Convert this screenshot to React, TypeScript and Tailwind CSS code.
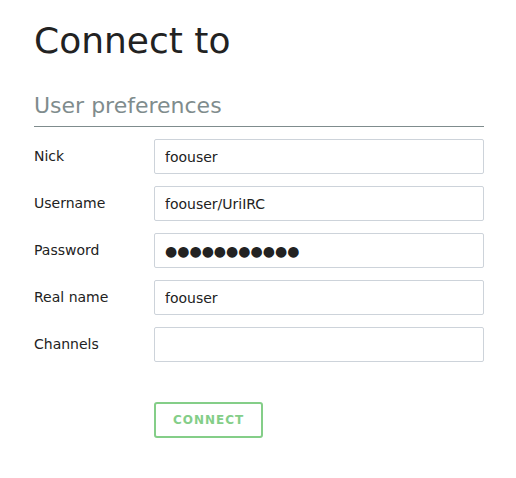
import React from "react";

const fields = [
  { label: "Nick", value: "foouser" },
  { label: "Username", value: "foouser/UriIRC" },
  { label: "Password", value: "●●●●●●●●●●●" },
  { label: "Real name", value: "foouser" },
  { label: "Channels", value: "" },
];

export default function App() {
  return (
    <div className="min-h-screen bg-white pl-[34px] pr-[32px] font-['DejaVu_Sans',sans-serif] text-[#222]">
      <h1 className="pt-[20px] text-[36px] leading-[42px] font-normal">Connect to</h1>
      <h2 className="mt-[31px] border-b border-[#7f8c8d] pb-[7px] text-[22px] leading-[26px] text-[#7f8c8d]">
        User preferences
      </h2>
      <form className="mt-[12px] flex flex-col gap-[12px]" onSubmit={(e) => e.preventDefault()}>
        {fields.map((f) => (
          <div key={f.label} className="flex items-center">
            <label className="w-[120px] shrink-0 text-[14px]">{f.label}</label>
            <input
              type="text"
              defaultValue={f.value}
              className="h-[35px] min-w-0 flex-1 rounded-[2px] border border-[#cdd3da] px-[10px] text-[14px] text-[#222] outline-none"
            />
          </div>
        ))}
        <div className="mt-[28px] pl-[120px]">
          <button
            type="submit"
            className="h-[36px] rounded-[3px] border-2 border-[#84ce88] px-[17px] text-[12px] font-bold uppercase tracking-[1px] text-[#84ce88]"
          >
            Connect
          </button>
        </div>
      </form>
    </div>
  );
}
